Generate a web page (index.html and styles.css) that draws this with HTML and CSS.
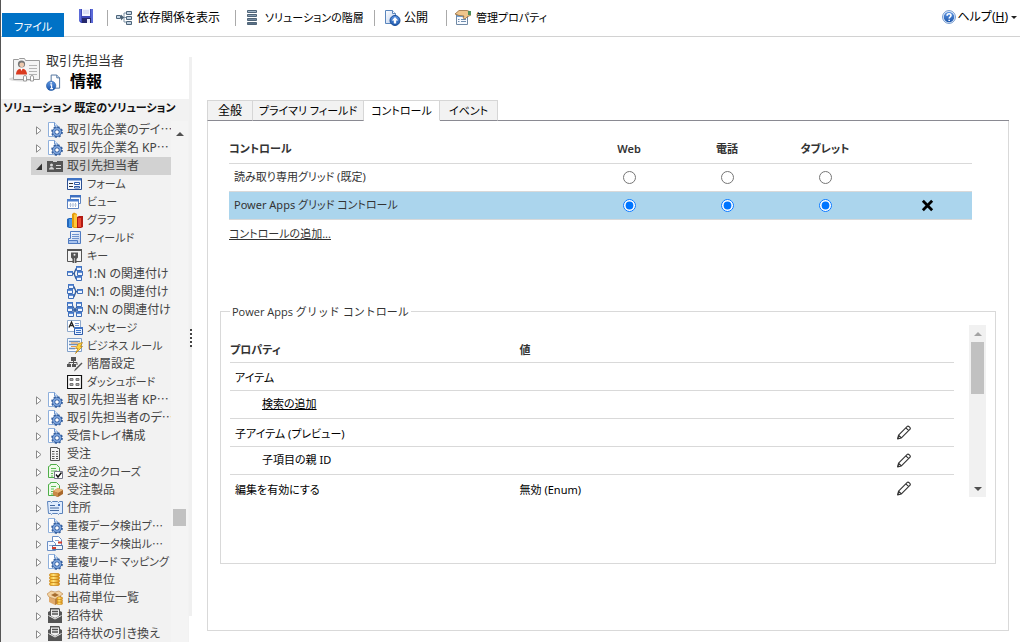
FILE: index.html
```html
<!DOCTYPE html>
<html lang="ja">
<head>
<meta charset="utf-8">
<title>取引先担当者 情報</title>
<link rel="stylesheet" href="styles.css">
</head>
<body>
<svg class="sprite" aria-hidden="true">
  <defs>
    <linearGradient id="g-blue" x1="0" y1="0" x2="0" y2="1"><stop offset="0" stop-color="#5f97e4"/><stop offset="1" stop-color="#1d57ad"/></linearGradient>
    <linearGradient id="g-steel" x1="0" y1="0" x2="0" y2="1"><stop offset="0" stop-color="#a9bccd"/><stop offset="1" stop-color="#566c82"/></linearGradient>
    <linearGradient id="g-gold" x1="0" y1="0" x2="1" y2="0"><stop offset="0" stop-color="#f0a818"/><stop offset=".4" stop-color="#ffe27a"/><stop offset="1" stop-color="#d98a10"/></linearGradient>
    <linearGradient id="g-pale" x1="0" y1="0" x2="1" y2="1"><stop offset="0" stop-color="#ffffff"/><stop offset="1" stop-color="#b9cdee"/></linearGradient>
  </defs>
  <symbol id="i-gear" viewBox="0 0 16 16">
    <path d="M1.500 14.500V.500h6l3 3v11z" fill="#fff" stroke="#8fb0dc"/><path d="M7.500.500v3.500h3.500" fill="#dfe9f7" stroke="#6d96cf"/>
    <circle cx="10" cy="10" r="4.900" fill="none" stroke="#35609f" stroke-width="2" stroke-dasharray="2 1.848"/>
    <circle cx="10" cy="10" r="3.300" fill="#fff" stroke="#2f5a9e" stroke-width="3"/><circle cx="10" cy="10" r="3.300" fill="none" stroke="#7ea6de" stroke-width="1.600"/>
  </symbol>
  <symbol id="i-card" viewBox="0 0 16 16">
    <path d="M0 3h6v1h4V3h6v11H0z" fill="#555"/><circle cx="4.500" cy="7" r="1.500" fill="#d8d8d8"/><path d="M2 11.500c0-3.500 5-3.500 5 0z" fill="#d8d8d8"/><path d="M9 7.500h5M9 10.500h5" stroke="#d8d8d8"/>
  </symbol>
  <symbol id="i-form" viewBox="0 0 16 16">
    <path d="M.5 2.500h14v11H.5z" fill="#f6faff" stroke="#2b4f93"/><path d="M1 2h13v2.500H1z" fill="#3f73c4"/><path d="M2 7.500h4M2 10.500h4" stroke="#333"/><path d="M7.500 6.500h5v2h-5zM7.500 10.500h5v1.500h-5z" fill="#fff" stroke="#2f5ca9"/>
  </symbol>
  <symbol id="i-view" viewBox="0 0 16 16">
    <path d="M3.500 1.500h10v8h-10z" fill="#fff" stroke="#5d83c1"/><path d="M3 1h11v2.500H3z" fill="#3e70c0"/><path d="M.5 5.500h11v9H.5z" fill="#fff" stroke="#5d83c1"/><path d="M0 5h12v2.500H0z" fill="#4b7dcc"/><path d="M3.500 9v4M6 9v4M8.500 9v4" stroke="#a9b9d2"/><path d="M2 11h8" stroke="#c7d3e6"/>
  </symbol>
  <symbol id="i-chart" viewBox="0 0 16 16">
    <path d="M0 7l2-1h3v10H2l-2-1z" fill="#2468bd"/><path d="M2 7h3v8H2z" fill="#4a97e2"/><path d="M5 2l2-1.500L10 2v14H7l-2-1z" fill="#e39b0c"/><path d="M7 2.500h3V15H7z" fill="#ffc83a"/><path d="M10 5l2-1h4v11l-2 1h-4z" fill="#b31a12"/><path d="M11 6h3v9h-3z" fill="#ec4a34"/>
  </symbol>
  <symbol id="i-field" viewBox="0 0 16 16">
    <path d="M3.500 1.500h10v12h-12v-5h2z" fill="url(#g-pale)" stroke="#4f7ac0"/><path d="M5 4.500h7M5 6.500h7M5 8.500h7" stroke="#6f94cf"/><path d="M1.500 10.500h9v3h-9z" fill="#a9c4ee" stroke="#4f7ac0"/>
  </symbol>
  <symbol id="i-key" viewBox="0 0 16 16">
    <path d="M.5 1.500h14v12H.5z" fill="#f4f4f4" stroke="#555"/><path d="M0 1h15v2H0z" fill="#555"/><path d="M4 4.500h7v5L9.500 11v4h-4v-4L4 9.500z" fill="#555"/><circle cx="7.500" cy="6.800" r="1" fill="#eee"/><path d="M7.500 10v5" stroke="#ddd" stroke-width=".7"/>
  </symbol>
  <symbol id="box" viewBox="0 0 6 5"><path d="M.5.500h5v4h-5z" fill="#eef5ff" stroke="#3f6db5"/><path d="M0 0h6v1.800H0z" fill="#4377c7"/></symbol>
  <symbol id="i-1n" viewBox="0 0 16 16">
    <path d="M5 7.500h3M11 3H9L7 7.500l2 5h2" stroke="#345f9f" stroke-width="1.400" fill="none"/><use href="#box" x="0" y="5" width="6" height="5"/><use href="#box" x="9" y="0" width="6" height="5"/><use href="#box" x="10" y="5" width="6" height="5"/><use href="#box" x="9" y="10" width="6" height="5"/>
  </symbol>
  <symbol id="i-n1" viewBox="0 0 16 16">
    <path d="M5 3h2l2 4.500-2 5H5M8 7.500h3" stroke="#345f9f" stroke-width="1.400" fill="none"/><use href="#box" x="1" y="0" width="6" height="5"/><use href="#box" x="0" y="5" width="6" height="5"/><use href="#box" x="1" y="10" width="6" height="5"/><use href="#box" x="10" y="5" width="6" height="5"/>
  </symbol>
  <symbol id="i-nn" viewBox="0 0 16 16">
    <path d="M5 3l6 10M11 3L5 13M4 8h8" stroke="#345f9f" stroke-width="1.400" fill="none"/><use href="#box" x="0" y="0" width="6" height="5"/><use href="#box" x="0" y="5" width="6" height="5"/><use href="#box" x="1" y="10" width="6" height="5"/><use href="#box" x="9" y="0" width="6" height="5"/><use href="#box" x="10" y="5" width="6" height="5"/><use href="#box" x="9" y="10" width="6" height="5"/>
  </symbol>
  <symbol id="i-msg" viewBox="0 0 16 16">
    <path d="M.5.500h13v11H.5z" fill="#fff" stroke="#8fa9cc"/><path d="M2 7.500L4.500 2 7 7.500M3 5.500h3" stroke="#222" stroke-width="1.300" fill="none"/><path d="M8 3.500h4M8 5.500h4" stroke="#7698cf"/><path d="M7.500 7.500h8v7h-8z" fill="#e6f0ff" stroke="#2f5ca9"/><path d="M7 7h9v2H7z" fill="#3f73c4"/><path d="M9 10.500h5M9 12.500h5" stroke="#3f73c4"/>
  </symbol>
  <symbol id="i-rule" viewBox="0 0 16 16">
    <path d="M.5.500h14v13H.5z" fill="#f8fbff" stroke="#7f9fc9"/><path d="M2 3.500h11M2 6.500h9M2 10.500h6" stroke="#6e8fbb" stroke-width="1.400" fill="none"/><path d="M4 5h7M4 8.500h5" stroke="#e89a45"/><path d="M11.500 5.500l4-1-2 4h2l-7 7 2.500-5H8.500z" fill="#ffd440" stroke="#b37b13" stroke-width=".7"/>
  </symbol>
  <symbol id="i-hier" viewBox="0 0 16 16">
    <path d="M4 1h5v4H4zM0 8h4v3H0zM5 8h4v3H5z" fill="#555"/><path d="M6.500 4v4M2 8V6.500h8V9" stroke="#555" fill="none"/><path d="M15.500 7.500L9 14l-2 1.500L8 13l6.500-6.500z" fill="#555"/>
  </symbol>
  <symbol id="i-dash" viewBox="0 0 16 16">
    <path d="M.5 1.500h14v13H.5z" fill="#fff" stroke="#111" stroke-width="1.200"/><path d="M3 4.500h3v2H3zM9 4.500h3v2H9zM3 9.500h3v2H3zM9 9.500h3v2H9z" fill="#aaa" stroke="#777"/>
  </symbol>
  <symbol id="i-order" viewBox="0 0 16 16">
    <path d="M3.500 1.500h7v1h2v12h-9z" fill="#f5f5f5" stroke="#555"/><path d="M5 5.500h2.500M9 5.500h2M5 8h2.500M9 8h2M5 10.500h2.500M9 10.500h2M5 12.500h2.500M9 12.500h2" stroke="#555"/>
  </symbol>
  <symbol id="i-close" viewBox="0 0 16 16">
    <path d="M1.500 2.500l2-1v-1h6l3 3v10h-11z" fill="#eefbe9" stroke="#4fae49"/><path d="M4 4.500h5M4 7h6M4 9.500h2M4 12h2" stroke="#5dbb55"/><path d="M7.500 7.500h8v7h-8z" fill="#fff" stroke="#778"/><path d="M9 10.500l2 2.500 3.500-4.500" stroke="#111" stroke-width="1.400" fill="none"/>
  </symbol>
  <symbol id="i-product" viewBox="0 0 16 16">
    <path d="M1.500 2.500l2-1v-1h6l3 3v10h-11z" fill="#eefbe9" stroke="#4fae49"/><path d="M4 4.500h5M4 7h3M4 9.500h2M4 12h2" stroke="#5dbb55"/><path d="M6 9l5-3 5 2v4l-5 3-5-2z" fill="#a8682b"/><path d="M6 9l5-3 5 2-5 3z" fill="#e8b474"/><path d="M6 9l5 2v4l-5-2z" fill="#c98a48"/>
  </symbol>
  <symbol id="i-address" viewBox="0 0 16 16">
    <path d="M.5 1.500h3l1 1 1-1h5l1 1 1-1h3v12h-3l-1 1-1-1h-5l-1 1-1-1h-2z" fill="#dfecfd" stroke="#5a82bb"/><path d="M3 5.500h5M3 8h9M3 10.500h9" stroke="#45699f"/><path d="M11 4h2v2h-2z" fill="#3e70c0"/>
  </symbol>
  <symbol id="i-dup" viewBox="0 0 16 16">
    <path d="M5.500.500h6l3 3v7h-9z" fill="#fff" stroke="#6b8fc6"/><path d="M.5 5.500h6l2 2v7h-8z" fill="#f2f7ff" stroke="#6b8fc6"/><path d="M8 4.500h4M2 9.500h4" stroke="#8fabd6"/><path d="M5.500 9.500h10v4h-10z" fill="#f3f6fb" stroke="#5274a8"/><path d="M11 6.500h4M5 12h4" stroke="#d23b2d" stroke-width="2"/>
  </symbol>
  <symbol id="i-unit" viewBox="0 0 16 16">
    <g fill="url(#g-gold)" stroke="#c7810f" stroke-width=".7"><rect x="2.500" y="10.500" width="10" height="3" rx="1.500"/><rect x="2.500" y="7.500" width="10" height="3" rx="1.500"/><rect x="2.500" y="4.500" width="10" height="3" rx="1.500"/><rect x="2.500" y="1.500" width="10" height="3" rx="1.500"/></g>
  </symbol>
  <symbol id="i-units" viewBox="0 0 16 16">
    <path d="M2 7l6 2 6-3v6l-6 3-6-3z" fill="#e0aa6c"/><path d="M8 9l6-3v6l-6 3z" fill="#b9803f"/><path d="M0 4l4-3 4 1 4-1 4 3-3 2-5 3-6-2z" fill="#f3d3a4" stroke="#b9803f" stroke-width=".6"/><path d="M4 5l4-2 4 2-4 2z" fill="#a56c2f"/><g fill="url(#g-gold)" stroke="#c7810f" stroke-width=".5"><rect x="10" y="12" width="5.500" height="2.500" rx="1"/><rect x="10" y="9.500" width="5.500" height="2.500" rx="1"/><rect x="10" y="7" width="5.500" height="2.500" rx="1"/></g>
  </symbol>
  <symbol id="i-invite" viewBox="0 0 16 16">
    <path d="M1 4l2-1V0h9l1 1v2l2 1v11H1z" fill="#555"/><path d="M4 1.500h8V8l-4 2-4-2z" fill="#eee"/><path d="M5 3.500h6M5 6h6" stroke="#555" stroke-width="1.400"/><path d="M1.500 7.500L8 11l6.500-3.500" stroke="#eee" fill="none"/>
  </symbol>
  <symbol id="i-save" viewBox="0 0 16 16">
    <path d="M1 1h14v14H3l-2-2z" fill="#3d48b8"/><path d="M1 1h2v12H1zM13 1h2v14h-2z" fill="#5b6ad8"/><path d="M4 1h8v7H4z" fill="#f4f6ff"/><path d="M5 3h6M5 5h6" stroke="#c4cbe8"/><path d="M4 10h9v5H4z" fill="#25286b"/><path d="M9 11h3v4H9z" fill="#eef"/>
  </symbol>
  <symbol id="i-dep" viewBox="0 0 16 16">
    <path d="M5 7.500h4M10 3H8v9h2M8 7.500h2" stroke="#7f93a6" fill="none"/><g fill="#c3d3e2" stroke="#4f667b"><path d="M.5 5.500h4v3h-4zM10.500 1.500h5v3h-5zM10.500 6.500h5v3h-5zM10.500 11.500h5v3h-5z"/></g><path d="M5 4.500L8 7.500l-3 3z" fill="#4b6175"/>
  </symbol>
  <symbol id="i-layers" viewBox="0 0 16 16">
    <g fill="url(#g-steel)" stroke="#4f6478"><path d="M3.500.500h9v2h-9zM3.500 4.500h9v2h-9zM3.500 8.500h9v2h-9zM3.500 12.500h9v2h-9z"/></g>
  </symbol>
  <symbol id="i-publish" viewBox="0 0 16 16">
    <path d="M.5.500h7l3 3v10h-10z" fill="url(#g-pale)" stroke="#5a86bd"/><path d="M7.500.500v3h3" fill="#fff" stroke="#5a86bd"/><circle cx="10" cy="10.500" r="5" fill="url(#g-blue)" stroke="#174c97"/><path d="M10 7l3.200 3.500h-2v3H8.800v-3h-2z" fill="#fff"/>
  </symbol>
  <symbol id="i-managed" viewBox="0 0 16 16">
    <path d="M1.500 4.500h11v10h-11z" fill="#f7faff" stroke="#7089a5"/><path d="M2 5h10v2H2z" fill="#70a0d4"/><path d="M3 9.500h1.500M6 9.500h5M3 11.500h1.500M6 11.500h5" stroke="#6f8dae"/><path d="M0 4l4-3.500h8L16 2v3l-4 2-2 2-2-1 1-2-5-.500z" fill="#efc58c" stroke="#8c5e2c" stroke-width=".7"/><path d="M13 1h3v4h-3z" fill="#4e8f5c"/>
  </symbol>
  <symbol id="i-help" viewBox="0 0 16 16">
    <circle cx="8" cy="8" r="7.300" fill="#fff" stroke="#4f80c4"/><circle cx="8" cy="8" r="6" fill="url(#g-blue)"/><path d="M5.800 6.500c0-3 4.500-2.800 4.500-.2 0 1.700-2.100 1.700-2.100 3.300M8.200 11v1.600" stroke="#fff" stroke-width="1.800" fill="none"/>
  </symbol>
  <symbol id="i-info" viewBox="0 0 16 18">
    <path d="M5.500.500h6l3 3v11h-9z" fill="#fff" stroke="#4c6f9b"/><path d="M11.500.500v3h3" fill="#dde8f5" stroke="#4c6f9b"/><circle cx="5.500" cy="12" r="5" fill="url(#g-blue)" stroke="#10509f" stroke-width=".6"/><path d="M4.500 11H6v4M4.500 15h3" stroke="#fff" stroke-width="1.200" fill="none"/><circle cx="5.500" cy="8.800" r=".9" fill="#fff"/>
  </symbol>
  <symbol id="i-contact" viewBox="0 0 32 28">
    <ellipse cx="13" cy="23" rx="13" ry="2.500" fill="#ddd"/><path d="M4.500 3.500h5l1-1h5l1 2h14v19h-26z" fill="#f4f4f4" stroke="#9a9a9a"/><circle cx="12.500" cy="8" r="3.600" fill="#777"/><circle cx="12.800" cy="8.800" r="2.400" fill="#edc9ae"/><path d="M7 18.500c0-8 11-8 11 0z" fill="#da3b20"/><path d="M11 12l1.500 3 1.500-3z" fill="#fff"/><path d="M20 9.500h8M20 12.500h8M20 15.500h8M20 18.500h8" stroke="#b4b4b4"/><g fill="#fff" stroke="#999"><path d="M14.500 25v-4a1.500 1.500 0 0 1 3 0v4zM21.500 25v-4a1.500 1.500 0 0 1 3 0v4z"/></g>
  </symbol>
  <symbol id="i-closed" viewBox="0 0 6 9"><path d="M.5.800L5 4.500.5 8.200z" fill="#fff" stroke="#8a8a8a"/></symbol>
  <symbol id="i-open" viewBox="0 0 6 9"><path d="M6 1.500V8H0z" fill="#333"/></symbol>
  <symbol id="i-pencil" viewBox="0 0 16 16"><path d="M1.200 14.800l1-4L11.500 1.500c1-1 4 1.500 3 3L5.200 13.800zM10 3l3 3M2.200 10.800l3 3" fill="#fff" stroke="#333" stroke-width="1.200" stroke-linejoin="round"/><path d="M1 15l.5-2.500 2 2z" fill="#333"/></symbol>
  <symbol id="i-x" viewBox="0 0 14 14"><path d="M2 2l10 10M12 2L2 12" stroke="#000" stroke-width="3"/></symbol>
</svg>

<div class="app">
  <header class="ribbon">
    <button class="file-tab kana" type="button">ファイル</button>
    <button class="tool save" type="button" aria-label="保存"><svg class="icon"><use href="#i-save"/></svg></button>
    <button class="tool dep" type="button"><svg class="icon"><use href="#i-dep"/></svg>依存関係を表示</button>
    <button class="tool layers kana" type="button"><svg class="icon"><use href="#i-layers"/></svg>ソリューションの階層</button>
    <button class="tool publish" type="button"><svg class="icon"><use href="#i-publish"/></svg>公開</button>
    <button class="tool managed kana" type="button"><svg class="icon"><use href="#i-managed"/></svg>管理プロパティ</button>
    <button class="help" type="button"><svg class="icon"><use href="#i-help"/></svg><span>ヘルプ(<u>H</u>)</span><i class="caret"></i></button>
  </header>

  <div class="body">
    <aside class="sidebar">
      <div class="entity">
        <svg class="entity-icon"><use href="#i-contact"/></svg>
        <div class="entity-text">
          <p class="entity-name">取引先担当者</p>
          <h1 class="entity-title"><svg class="info-icon"><use href="#i-info"/></svg>情報</h1>
        </div>
      </div>
      <div class="nav">
        <h2 class="solution">ソリューション 既定のソリューション</h2>
        <div class="tree-wrap">
          <ul class="tree">
            <li class="node"><svg class="twist"><use href="#i-closed"/></svg><svg class="icon"><use href="#i-gear"/></svg><a href="#">取引先企業のデイ<span class="dots">…</span></a></li>
            <li class="node"><svg class="twist"><use href="#i-closed"/></svg><svg class="icon"><use href="#i-gear"/></svg><a href="#">取引先企業名 KP<span class="dots">…</span></a></li>
            <li class="node selected"><svg class="twist"><use href="#i-open"/></svg><svg class="icon"><use href="#i-card"/></svg><a href="#">取引先担当者</a></li>
            <li class="node child kana"><svg class="icon"><use href="#i-form"/></svg><a href="#">フォーム</a></li>
            <li class="node child kana"><svg class="icon"><use href="#i-view"/></svg><a href="#">ビュー</a></li>
            <li class="node child kana"><svg class="icon"><use href="#i-chart"/></svg><a href="#">グラフ</a></li>
            <li class="node child kana"><svg class="icon"><use href="#i-field"/></svg><a href="#">フィールド</a></li>
            <li class="node child kana"><svg class="icon"><use href="#i-key"/></svg><a href="#">キー</a></li>
            <li class="node child"><svg class="icon"><use href="#i-1n"/></svg><a href="#">1:N の関連付け</a></li>
            <li class="node child"><svg class="icon"><use href="#i-n1"/></svg><a href="#">N:1 の関連付け</a></li>
            <li class="node child"><svg class="icon"><use href="#i-nn"/></svg><a href="#">N:N の関連付け</a></li>
            <li class="node child kana"><svg class="icon"><use href="#i-msg"/></svg><a href="#">メッセージ</a></li>
            <li class="node child kana"><svg class="icon"><use href="#i-rule"/></svg><a href="#">ビジネス ルール</a></li>
            <li class="node child"><svg class="icon"><use href="#i-hier"/></svg><a href="#">階層設定</a></li>
            <li class="node child kana"><svg class="icon"><use href="#i-dash"/></svg><a href="#">ダッシュボード</a></li>
            <li class="node"><svg class="twist"><use href="#i-closed"/></svg><svg class="icon"><use href="#i-gear"/></svg><a href="#">取引先担当者 KP<span class="dots">…</span></a></li>
            <li class="node"><svg class="twist"><use href="#i-closed"/></svg><svg class="icon"><use href="#i-gear"/></svg><a href="#">取引先担当者のデ<span class="dots">…</span></a></li>
            <li class="node"><svg class="twist"><use href="#i-closed"/></svg><svg class="icon"><use href="#i-gear"/></svg><a href="#">受信トレイ構成</a></li>
            <li class="node"><svg class="twist"><use href="#i-closed"/></svg><svg class="icon"><use href="#i-order"/></svg><a href="#">受注</a></li>
            <li class="node kana"><svg class="twist"><use href="#i-closed"/></svg><svg class="icon"><use href="#i-close"/></svg><a href="#">受注のクローズ</a></li>
            <li class="node"><svg class="twist"><use href="#i-closed"/></svg><svg class="icon"><use href="#i-product"/></svg><a href="#">受注製品</a></li>
            <li class="node"><svg class="twist"><use href="#i-closed"/></svg><svg class="icon"><use href="#i-address"/></svg><a href="#">住所</a></li>
            <li class="node kana"><svg class="twist"><use href="#i-closed"/></svg><svg class="icon"><use href="#i-gear"/></svg><a href="#">重複データ検出プ<span class="dots">…</span></a></li>
            <li class="node kana"><svg class="twist"><use href="#i-closed"/></svg><svg class="icon"><use href="#i-dup"/></svg><a href="#">重複データ検出ル<span class="dots">…</span></a></li>
            <li class="node kana"><svg class="twist"><use href="#i-closed"/></svg><svg class="icon"><use href="#i-gear"/></svg><a href="#">重複リード マッピング</a></li>
            <li class="node"><svg class="twist"><use href="#i-closed"/></svg><svg class="icon"><use href="#i-unit"/></svg><a href="#">出荷単位</a></li>
            <li class="node"><svg class="twist"><use href="#i-closed"/></svg><svg class="icon"><use href="#i-units"/></svg><a href="#">出荷単位一覧</a></li>
            <li class="node"><svg class="twist"><use href="#i-closed"/></svg><svg class="icon"><use href="#i-invite"/></svg><a href="#">招待状</a></li>
            <li class="node"><svg class="twist"><use href="#i-closed"/></svg><svg class="icon"><use href="#i-invite"/></svg><a href="#">招待状の引き換え</a></li>
          </ul>
          <div class="tree-scroll"><i class="arrow up"></i><i class="thumb"></i></div>
        </div>
      </div>
    </aside>
    <div class="splitter"><i class="grip"></i></div>

    <main class="content">
      <nav class="tabs">
        <button class="tab general" type="button">全般</button>
        <button class="tab primary kana" type="button">プライマリ フィールド</button>
        <button class="tab control kana active" type="button">コントロール</button>
        <button class="tab event kana" type="button">イベント</button>
        <i class="tab-rest"></i>
      </nav>
      <section class="panel">
        <table class="controls">
          <thead>
            <tr><th class="name">コントロール</th><th>Web</th><th>電話</th><th>タブレット</th><th></th></tr>
          </thead>
          <tbody>
            <tr>
              <td class="name">読み取り専用グリッド (既定)</td>
              <td><input type="radio" name="web" aria-label="読み取り専用グリッド Web"></td>
              <td><input type="radio" name="phone" aria-label="読み取り専用グリッド 電話"></td>
              <td><input type="radio" name="tablet" aria-label="読み取り専用グリッド タブレット"></td>
              <td></td>
            </tr>
            <tr class="current">
              <td class="name">Power Apps グリッド コントロール</td>
              <td><input type="radio" name="web" checked aria-label="Power Apps グリッド コントロール Web"></td>
              <td><input type="radio" name="phone" checked aria-label="Power Apps グリッド コントロール 電話"></td>
              <td><input type="radio" name="tablet" checked aria-label="Power Apps グリッド コントロール タブレット"></td>
              <td class="remove"><button type="button" aria-label="削除"><svg class="x-icon"><use href="#i-x"/></svg></button></td>
            </tr>
          </tbody>
        </table>
        <a class="add-control" href="#">コントロールの追加...</a>

        <fieldset class="group">
          <legend>Power Apps グリッド コントロール</legend>
          <div class="props-wrap">
            <div class="props-view">
              <table class="props">
                <thead><tr><th class="prop">プロパティ</th><th class="value">値</th><th class="edit"></th></tr></thead>
                <tbody>
                  <tr><td class="prop">アイテム</td><td></td><td></td></tr>
                  <tr class="sub"><td class="prop"><a href="#">検索の追加</a></td><td></td><td></td></tr>
                  <tr><td class="prop">子アイテム (プレビュー)</td><td></td><td class="edit"><button type="button" aria-label="編集"><svg class="icon"><use href="#i-pencil"/></svg></button></td></tr>
                  <tr class="sub"><td class="prop">子項目の親 ID</td><td></td><td class="edit"><button type="button" aria-label="編集"><svg class="icon"><use href="#i-pencil"/></svg></button></td></tr>
                  <tr><td class="prop">編集を有効にする</td><td class="value">無効 (Enum)</td><td class="edit"><button type="button" aria-label="編集"><svg class="icon"><use href="#i-pencil"/></svg></button></td></tr>
                </tbody>
              </table>
            </div>
            <div class="props-scroll"><i class="arrow up dim"></i><i class="thumb"></i><i class="arrow down"></i></div>
          </div>
        </fieldset>
      </section>
    </main>
  </div>
</div>
</body>
</html>
```

FILE: styles.css
```css
* { box-sizing: border-box; }

body {
  margin: 0;
  background: #fff;
  color: #333;
  font: 12px/18px "Noto Sans", "Noto Sans CJK JP", sans-serif;
  font-feature-settings: "palt";
}

button {
  margin: 0;
  padding: 0;
  border: 0;
  background: none;
  color: inherit;
  font: inherit;
  font-feature-settings: inherit;
  white-space: nowrap;
}

a { color: inherit; text-decoration: none; }

.sprite { position: absolute; width: 0; height: 0; }

.icon { display: block; flex: none; width: 16px; height: 16px; }

/* Labels made mostly of kana are set one size smaller */
.kana { font-size: 11px; }

.app {
  display: flex;
  flex-direction: column;
  height: 100vh;
  overflow: hidden;
  border-left: 1px solid #555;
}

/* Ribbon */
.ribbon {
  display: flex;
  flex: none;
  height: 37px;
  border-bottom: 1px solid #d2d2d2;
  color: #000;
}

.file-tab {
  width: 62px;
  height: 24px;
  margin: 13px 0 0 1px;
  padding-top: 3px;
  background: #0072c6;
  color: #fff;
}

.tool {
  display: flex;
  align-items: center;
  gap: 5px;
  height: 16px;
  margin-top: 10px;
  padding-left: 8px;
  border-left: 1px solid #aaa;
}

.tool.save { margin-top: 8px; margin-left: 14px; padding: 0; border: 0; }
.tool.dep { width: 128px; margin-left: 13px; }
.tool.layers { width: 139px; }
.tool.publish { width: 72px; gap: 3px; padding-left: 10px; }

.help {
  display: flex;
  align-items: center;
  height: 18px;
  margin: 8px 3px 0 auto;
}

.help .icon { width: 14px; height: 14px; margin-right: 1px; }

.caret {
  margin-left: 3px;
  border: 3px solid transparent;
  border-top-color: #222;
  border-bottom: 0;
}

/* Sidebar */
.body { display: flex; flex: 1; min-height: 0; }

.sidebar {
  display: flex;
  flex: none;
  flex-direction: column;
  width: 188px;
}

.entity {
  display: flex;
  flex: none;
  gap: 5px;
  height: 62px;
  padding: 13px 0 0 8px;
}

.entity-icon { flex: none; width: 32px; height: 28px; margin-top: 6px; }

.entity-name { margin: 0; font-size: 13px; line-height: 20px; }

.entity-title {
  display: flex;
  align-items: center;
  gap: 9px;
  margin: 0;
  color: #000;
  font-size: 16px;
  line-height: 20px;
}

.info-icon { width: 15px; height: 18px; margin-top: 4px; }

.nav {
  display: flex;
  flex: 1;
  flex-direction: column;
  min-height: 0;
  background: #f2f2f2;
}

.solution {
  flex: none;
  margin: 0;
  padding-left: 2px;
  color: #111;
  font-size: 11px;
  font-weight: 600;
  line-height: 17px;
  white-space: nowrap;
}

.tree-wrap { display: flex; flex: 1; min-height: 0; padding: 5px 1px 0 30px; }

.tree {
  flex: 1;
  min-width: 0;
  margin: 0;
  padding: 0;
  overflow: hidden;
  list-style: none;
}

.node {
  display: flex;
  align-items: center;
  height: 18px;
  padding-left: 5px;
  color: #444;
  white-space: nowrap;
}

.node.child { padding-left: 36px; }
.node.selected { background: #d2d2d2; }
.node .icon { margin-right: 4px; }
.dots { font-family: "Noto Sans CJK JP", sans-serif; line-height: 1; }

.twist { flex: none; width: 6px; height: 9px; margin-right: 5px; }

.tree-scroll {
  display: flex;
  flex: none;
  flex-direction: column;
  align-items: center;
  width: 17px;
  padding-top: 11px;
  background: #f4f4f4;
}

.tree-scroll .thumb { width: 13px; height: 17px; margin-top: 373px; }

.thumb { flex: none; background: #c1c1c1; }

.arrow { flex: none; border: 4px solid transparent; }
.arrow.up { border-top: 0; border-bottom-color: #505050; }
.arrow.down { border-bottom: 0; border-top-color: #505050; }
.arrow.dim { border-bottom-color: #a3a3a3; }

.splitter {
  display: flex;
  flex: none;
  width: 3px;
  margin: 20px 0 26px;
  background: #f0f0f0;
}

.grip {
  width: 2px;
  height: 18px;
  margin: 272px 0 0 1px;
  background: repeating-linear-gradient(#444 0 2px, #fff 2px 4px);
}

/* Content */
.content {
  display: flex;
  flex: 1;
  flex-direction: column;
  min-width: 0;
  padding: 63px 11px 11px 15px;
}

.tabs { display: flex; flex: none; height: 21px; color: #000; }

.tab {
  border: 1px solid #d6d6d6;
  border-bottom-color: #8a8a92;
  background: #f2f2f2;
}

.tab.general { width: 46px; }
.tab.primary { width: 111px; }
.tab.control { width: 76px; }
.tab.event { width: 58px; }
.tab + .tab { border-left: 0; }
.tab.active { border-bottom-color: #fff; background: #fff; }
.tab-rest { flex: 1; border-bottom: 1px solid #8a8a92; }

.panel {
  flex: 1;
  padding: 14px 12px 0;
  border: 1px solid #d9d9d9;
  border-top: 0;
  font-size: 11px;
}

table { border-collapse: collapse; table-layout: fixed; }
th, td { height: 28px; padding: 0; border-bottom: 1px solid #d9d9d9; text-align: center; }
th { font-weight: 600; }

.controls { width: calc(100% - 33px); margin-left: 9px; }
.controls th, .controls td { width: 98px; }
.controls .name { width: auto; padding-left: 5px; text-align: left; }
.controls th.name { padding-left: 0; }
.controls .current td { background: #abd5ed; }
.controls .remove { padding-left: 9px; }
.controls button, .edit button { display: block; margin: 0 auto; }
.controls input { display: block; width: 13px; height: 13px; margin: 0 auto; }

.x-icon { display: block; width: 13px; height: 13px; }

.add-control {
  display: inline-block;
  margin: 5px 0 0 9px;
  color: #333;
  text-decoration: underline;
}

.group {
  height: 261px;
  min-width: 0;
  margin: 60px 0 0;
  padding: 4px 9px 0;
  border: 1px solid #d9d9d9;
}

.group legend {
  padding: 0 2px;
  font-family: "Open Sans", "Noto Sans CJK JP", sans-serif;
  font-feature-settings: normal;
}

.props-wrap { display: flex; height: 172px; color: #000; }

.props-view { flex: 1; min-width: 0; padding: 10px 15px 0 0; overflow: hidden; }

.props { width: 100%; }
.props th { padding-top: 3px; color: #333; text-align: left; }
.props td { padding-top: 3px; text-align: left; }
.props .prop { width: 40%; padding-left: 5px; }
.props th.prop { padding-left: 0; }
.props .edit { width: 100px; padding-top: 0; }
.props .sub td { padding-top: 0; padding-bottom: 1px; }
.props .sub .prop { padding-left: 32px; }
.props tbody tr:last-child td { border-bottom: 0; }
.props a { text-decoration: underline; }
.props .icon { height: 15px; }

.props-scroll {
  display: flex;
  flex: none;
  flex-direction: column;
  align-items: center;
  width: 17px;
  padding: 7px 0 6px;
  background: #f1f1f1;
}

.props-scroll .thumb { width: 13px; height: 52px; margin-top: 6px; margin-bottom: auto; }
```
